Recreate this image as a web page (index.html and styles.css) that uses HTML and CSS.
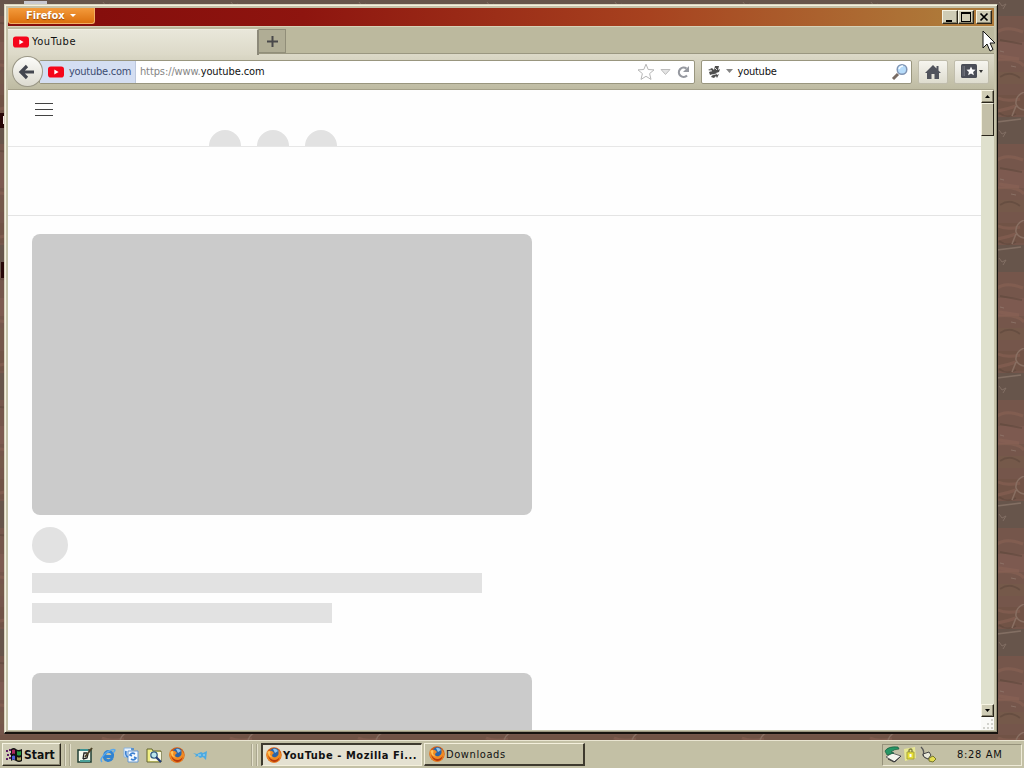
FILE: index.html
```html
<!DOCTYPE html>
<html lang="en">
<head>
  <meta charset="UTF-8">
  <meta name="viewport" content="width=device-width, initial-scale=1.0">
  <title>YouTube</title>
  <link rel="stylesheet" href="styles.css">
</head>
<body>
  <svg class="wallpaper" width="1024" height="768">
    <defs>
      <pattern id="stone" width="128" height="128" patternUnits="userSpaceOnUse" y="92">
        <rect width="128" height="128" fill="#75564b"/>
        <path d="M0 3h128v20H0z" fill="#715346"/>
        <path d="M0 25h128v27H0z" fill="#67554b"/>
        <path d="M0 78h128v18H0z" fill="#7d5a50"/>
        <path d="M0 108h128v12H0z" fill="#75594a"/>
        <g opacity=".5">
          <path d="M102 6q8 4 22 1M100 69q9-8 27-1M103 92l20 3M0 17q30-8 60 0t60-3M0 101q40 6 80-2t48 3" stroke="#8d6456" stroke-width="3" fill="none"/>
          <path d="M103 21q8 6 17 1M104 76l22 4M104 113q10-7 20 1M0 59q50 6 95 0" stroke="#594438" stroke-width="2" fill="none"/>
          <path d="M103 38l3 4 4-2-3 5M104 87l4 1M115 102l5 1" stroke="#9b877b" stroke-width="1" fill="none"/>
          <path d="M128 0q-9 4-8 12q2 5 8 6M120 14l-4 10M101 30l24-3" stroke="#a08a7c" stroke-width="1.500" fill="none"/>
        </g>
      </pattern>
      <symbol id="firefox" viewBox="0 0 16 16">
        <circle cx="8" cy="8" r="7.7" fill="#d95c10"/>
        <circle cx="8.5" cy="6.3" r="5.2" fill="#2a65a8"/>
        <path d="M7 2q3-1 5 2L9 6z" fill="#8ec5ec"/>
        <path d="M1 3l1 2q2-2 4-1l2 2-2 2q0 3 4 2 4-2 2-7 4 3 3 7-2 6-8 5.5Q1 14 .5 8z" fill="#f08a22"/>
        <path d="M2 8q2 5 7 5 4-1 5-4-1 6-6 6-5-1-6-7z" fill="#b93a0b"/>
        <path d="M1.500 5q2-2 3 0L4 8l3 3-4-2z" fill="#ffc25a"/>
      </symbol>
      <symbol id="youtube" viewBox="0 0 16 12">
        <rect y=".5" width="16" height="11" rx="2.8" fill="#f5051b"/>
        <path d="M6.300 3.600v4.800L10.600 6z" fill="#fff"/>
      </symbol>
    </defs>
    <rect width="1024" height="768" fill="url(#stone)"/>
    <rect x="24" y="1" width="23" height="3" fill="#c8c8d0"/>
    <path d="M0 113h4v15H0zM1 262h3v16H1z" fill="#280706"/>
    <path d="M3 116h1v8H3z" fill="#f6e8e4"/>
  </svg>

  <div class="window">
    <div class="titlebar">
      <div class="firefox-button"><span>Firefox</span> <span class="arrow"></span></div>
      <div class="window-buttons">
        <div class="win-btn"><svg width="14" height="12"><path d="M3 9h6v2H3z"/></svg></div>
        <div class="win-btn"><svg width="14" height="12"><path d="M2 1h10v10H2zM3 3v7h8V3z" fill-rule="evenodd"/></svg></div>
        <div class="win-btn close"><svg width="14" height="12"><path d="M3.500 2.500l7 7M10.500 2.500l-7 7" stroke="#000" stroke-width="1.700"/></svg></div>
      </div>
    </div>

    <div class="tabs">
      <div class="tab"><svg width="16" height="12"><use href="#youtube"/></svg><span>YouTube</span></div>
      <div class="new-tab"><svg width="11" height="11"><path d="M4.500 0h2v4.500H11v2H6.500V11h-2V6.500H0v-2h4.500z" fill="#48484a"/></svg></div>
    </div>

    <div class="navbar">
      <div class="back"><svg width="18" height="16"><path d="M9 2L3 8l6 6M4 8h12" stroke="#43464f" stroke-width="3.200" fill="none"/></svg></div>
      <div class="urlbar">
        <div class="identity"><svg width="16" height="12"><use href="#youtube"/></svg><span>youtube.com</span></div>
        <div class="url">https://www.<b>youtube.com</b></div>
        <svg class="star" width="18" height="18"><path d="M9 1.200l2.200 5.300 5.800.4-4.400 3.700 1.400 5.800L9 13.300l-5 3.100 1.400-5.800L1 6.900l5.800-.4z" fill="#fff" stroke="#b6b6b6"/></svg>
        <svg class="drop" width="11" height="8"><path d="M1 1.500h9L5.500 6.500z" fill="#e4e4e4" stroke="#bcbcbc"/></svg>
        <svg class="reload" width="14" height="14"><path d="M10.500 3.500A4.700 4.700 0 1 0 11 10.500" fill="none" stroke="#9699a0" stroke-width="2.200"/><path d="M13 1v6H7z" fill="#9699a0"/></svg>
      </div>
      <div class="search">
        <svg width="14" height="14"><path d="M1 5l4-2 2 2 1-4h4l-1 4 2-1-1 3-3 1 1 2 2-1-2 4-1-2-2 2-3-1 2-3-3 1-1-3 3-1z" fill="#4e4e4e"/><path d="M3 5l2 1M8 3l2 2M5 10l4-1" stroke="#ddd"/></svg>
        <svg width="7" height="5"><path d="M0 0h7L3.500 4z" fill="#858585"/></svg>
        <span>youtube</span>
        <svg class="magnifier" width="18" height="18"><path d="M7 11l-5 5" stroke="#786b64" stroke-width="3"/><circle cx="11" cy="6.500" r="4.800" fill="#b7dcfa" stroke="#8095b4" stroke-width="1.500"/><path d="M8 6q1-3 4-3" stroke="#f4fbff" stroke-width="1.500" fill="none"/></svg>
      </div>
      <div class="tool"><svg width="16" height="14"><path d="M8 0L0 8h2v6h4.500V9h3v5H14V8h2l-2.500-2.500V1h-2v2.500z" fill="#50535c"/></svg></div>
      <div class="tool bookmarks"><svg width="23" height="15"><rect x="0" y="0" width="16" height="14" rx="1.500" fill="#4a4d57"/><path d="M2 2v10M3.500 2v10" stroke="#7d808a" stroke-width=".7"/><path d="M10 2.500l1.300 3.100 3.300.2-2.500 2.100.8 3.300L10 9.500l-2.900 1.700.8-3.300-2.500-2.100 3.300-.2z" fill="#fff"/><path d="M18 6h4l-2 3z" fill="#333"/></svg></div>
    </div>

    <div class="viewport">
      <div class="page">
        <div class="masthead">
          <div class="menu-icon"><i></i><i></i><i></i></div>
          <div class="dots"><i></i><i></i><i></i></div>
        </div>
        <div class="chips"></div>
        <div class="feed">
          <div class="video">
            <div class="thumb"></div>
            <div class="avatar"></div>
            <div class="line"></div>
            <div class="line short"></div>
          </div>
          <div class="video">
            <div class="thumb"></div>
          </div>
        </div>
      </div>
      <div class="scrollbar">
        <div class="scroll-btn"><svg width="5" height="3"><path d="M0 3h5L2.500 0z"/></svg></div>
        <div class="scroll-thumb"></div>
        <div class="scroll-btn down"><svg width="5" height="3"><path d="M0 0h5L2.500 3z"/></svg></div>
        <svg class="grip" width="13" height="13"><path d="M10 2h2v2h-2zM6 6h2v2H6zM10 6h2v2h-2zM2 10h2v2H2zM6 10h2v2H6zM10 10h2v2h-2z" fill="#d3d3cd"/></svg>
      </div>
    </div>
  </div>

  <div class="taskbar">
    <div class="start">
      <svg width="17" height="16"><path d="M0 3h2v2H0zM1 7h2v2H1zM0 11h2v2H0zM3 2h2v2H3zM4 6h1v2H4zM3 10h2v2H3z" fill="#5d1f66"/><path d="M5 2q3-2 5 0t6 0v12q-3 2-6 0t-5 0z" fill="#111"/><path d="M6 3q2-1 3 0v4q-1-1-3 0z" fill="#b02a60"/><path d="M11 4q2 1 4 0v4q-2 1-4 0z" fill="#259b43"/><path d="M6 9q2-1 3 0v4q-1-1-3 0z" fill="#5060d8"/><path d="M11 10q2 1 4 0v3q-2 1-4 0z" fill="#a89d59"/></svg>
      <span>Start</span>
    </div>
    <div class="separator"></div>
    <div class="quick-launch">
      <svg width="16" height="16"><path d="M1 3h13v12H1z" fill="#f6fbed" stroke="#1f3e34" stroke-width="1.500"/><path d="M3 2h8v2H3z" fill="#3d9292"/><path d="M3 14h10" stroke="#4ba098" stroke-width="2"/><path d="M6 12l1-6h3M6 12l4-1 1-4" fill="none" stroke="#222" stroke-width="1.300"/><path d="M8 10l7-9" stroke="#4a4127" stroke-width="2"/></svg>
      <svg width="16" height="16"><path d="M12.500 11q-2 3-5 2.500-4-1-3-5.500 1-4 5-3.500 4 1 3 5H5" fill="none" stroke="#3183d1" stroke-width="2.800"/><path d="M2 15Q-1 12 6 6q7-5 9-3 0 1-2 3" fill="none" stroke="#58a8ed" stroke-width="1.500"/></svg>
      <svg width="16" height="16"><path d="M1 1h8v9H1z" fill="#e7f3ff" stroke="#8ab4df"/><path d="M5 4h10v11H5z" fill="#f6fbff" stroke="#6596d0"/><path d="M12 7q-3-2-5 1l2 1M8 12q3 2 5-1l-2-1M3 4q-1 5 2 6M11 2H8" fill="none" stroke="#3c81d2" stroke-width="1.700"/></svg>
      <svg width="16" height="16"><path d="M1 2h5l1 2h8v11H1z" fill="#f1ef83" stroke="#62652f"/><path d="M4 5h11v9H4z" fill="#fbfae0"/><circle cx="8" cy="8" r="3.200" fill="#bde8ee" stroke="#376083" stroke-width="1.300"/><path d="M10 10l5 5" stroke="#243d78" stroke-width="2.200"/></svg>
      <svg width="16" height="16"><use href="#firefox"/></svg>
      <svg width="16" height="16"><path d="M1 6l4 1 4-2 2 1 4-2-1 9-3-3-3 1-2-2-3 1 1-2z" fill="#4caae2"/><path d="M6 8h3M11 8h2" stroke="#b0d8ed"/></svg>
    </div>
    <div class="separator second"></div>
    <div class="task active"><svg width="16" height="16"><use href="#firefox"/></svg><span>YouTube - Mozilla Fi...</span></div>
    <div class="task"><svg width="16" height="16"><use href="#firefox"/></svg><span>Downloads</span></div>
    <div class="tray">
      <svg width="18" height="17"><path d="M2 11l6-4 9 3-6 6z" fill="#f5f5ed" stroke="#666"/><path d="M4 13l6 3 7-6" fill="none" stroke="#333"/><path d="M1 5q3-5 13-4l1 2q-5 0-8 3l3 1-7 2z" fill="#279665" stroke="#155a3c" stroke-width=".7"/></svg>
      <svg width="17" height="17"><path d="M2 3l11-2 1 11-11 3z" fill="#e8e892"/><path d="M5 6h7v7H5z" fill="#e7df35" stroke="#a8a53c"/><path d="M7 6V4q2-2 3 0v2" fill="none" stroke="#818143" stroke-width="1.300"/><path d="M7.500 8h2v3h-2z" fill="#fff"/></svg>
      <svg width="18" height="17"><path d="M2 1q4 4 2 8 3 4 8 4" fill="none" stroke="#555" stroke-width="1.300"/><path d="M4 8l6-2 2 3-3 4-4-2z" fill="#e8e8d8" stroke="#444"/><path d="M10 12l4-2 3 3-3 3-4-1z" fill="#e4dd51" stroke="#77772b"/></svg>
      <span class="clock">8:28 AM</span>
    </div>
  </div>

  <svg class="cursor" width="14" height="22"><path d="M1 1v17l4-4 3 7 3-1.500-3-6.500h5z" fill="#fff" stroke="#111"/></svg>
</body>
</html>
```
FILE: styles.css
```css
* {
  margin: 0;
  padding: 0;
  box-sizing: border-box;
}
body {
  width: 1024px;
  height: 768px;
  overflow: hidden;
  position: relative;
  display: flex;
  flex-direction: column;
  justify-content: space-between;
  padding-top: 4px;
  font-family: "DejaVu Sans Condensed", "DejaVu Sans", sans-serif;
  font-size: 11px;
  color: #111;
  background-color: #75564b;
}
svg {
  display: block;
  flex: none;
}
span, .url {
  white-space: nowrap;
}
.wallpaper {
  position: absolute;
  top: 0;
  left: 0;
  z-index: -1;
}
.window {
  width: 994px;
  height: 730px;
  margin-left: 4px;
  padding: 3px 3px 2px;
  background: #c5c2a9;
  border: 1px solid #d9d5bf;
  border-right: 1px solid #17130f;
  border-bottom: 2px solid #17130f;
  box-shadow: inset 1px 1px #f5f1df, inset -1px -1px #99947e;
}
.titlebar {
  height: 18px;
  display: flex;
  justify-content: space-between;
  background: linear-gradient(90deg, #860e0c 9%, #8e150f 30%, #a7421f 65%, #ae7939 95%);
}
.firefox-button {
  width: 87px;
  height: 16px;
  padding-left: 17px;
  display: flex;
  align-items: center;
  gap: 5px;
  color: #fff;
  font-weight: bold;
  letter-spacing: -0.1px;
  text-shadow: 0 1px 1px #934300;
  background: linear-gradient(#f39b3c, #dc700e);
  border: 1px solid #f2b064;
  border-top: 0;
  border-radius: 0 0 3px 3px;
}
.arrow {
  border: 3px solid transparent;
  border-top-color: #fff;
  border-bottom: 0;
}
.window-buttons {
  display: flex;
  padding: 2px 2px 0 0;
}
.win-btn, .scroll-btn, .start {
  background: #cfccb5;
  border: 1px solid #f6f3e2;
  border-right-color: #29251b;
  border-bottom-color: #29251b;
  box-shadow: inset -1px -1px #898570;
}
.win-btn {
  width: 16px;
  height: 14px;
}
.close {
  margin-left: 2px;
}
.tabs {
  height: 28px;
  padding-top: 2px;
  display: flex;
  background: #bcb99e;
  border-top: 1px solid #d7d2b8;
  border-bottom: 1px solid #9a9781;
}
.tab {
  width: 251px;
  height: 26px;
  display: flex;
  align-items: center;
  gap: 3px;
  padding: 0 0 2px 5px;
  background: linear-gradient(#e9e7da, #dcd9c8);
  border-top: 1px solid #f1efe3;
  border-right: 2px solid #8c8979;
}
.tab span {
  letter-spacing: 0.6px;
}
.new-tab {
  width: 27px;
  height: 24px;
  display: flex;
  align-items: center;
  justify-content: center;
  background: #b0ad95;
  border: 1px solid #918e79;
  border-left: 0;
}
.navbar {
  height: 36px;
  display: flex;
  align-items: center;
  padding: 0 5px 0 4px;
  background: linear-gradient(#dcd9c8, #bebba2);
  border-bottom: 1px solid #a5a18a;
}
.back {
  width: 31px;
  height: 31px;
  border: 1px solid #9a9786;
  border-radius: 50%;
  display: flex;
  align-items: center;
  justify-content: center;
  background: linear-gradient(#fcfcf9, #dcdacf);
  z-index: 1;
}
.urlbar, .search {
  height: 24px;
  display: flex;
  align-items: center;
  background: #fff;
  border: 1px solid #99967f;
  border-radius: 2px;
}
.urlbar {
  width: 657px;
  margin-left: -4px;
}
.identity {
  width: 96px;
  height: 22px;
  display: flex;
  align-items: center;
  gap: 5px;
  padding-left: 8px;
  color: #3d4c71;
  letter-spacing: -0.25px;
  background: #d4def2;
  border-right: 1px solid #bdc8dd;
}
.url {
  flex: 1;
  margin-left: 4px;
  letter-spacing: -0.1px;
  color: #858585;
}
.url b {
  color: #111;
  font-weight: normal;
}
.drop {
  margin-left: 5px;
}
.reload {
  margin: 0 4px 0 5px;
}
.search {
  width: 212px;
  margin-left: 6px;
  padding: 0 2px 0 5px;
}
.search span {
  flex: 1;
  margin-left: 5px;
  letter-spacing: -0.25px;
}
.search svg + svg {
  margin-left: 5px;
}
.tool {
  width: 30px;
  height: 24px;
  margin-left: 6px;
  display: flex;
  align-items: center;
  justify-content: center;
  background: linear-gradient(#f6f5ef, #dedccf);
  border: 1px solid #c0bdac;
  border-radius: 2px;
}
.bookmarks {
  width: 35px;
  padding-left: 2px;
}
.viewport {
  height: 640px;
  display: flex;
  background: #fefefe;
}
.page {
  width: 973px;
  overflow: hidden;
}
.masthead {
  height: 57px;
  padding: 13px 0 0 27px;
  overflow: hidden;
  display: flex;
  border-bottom: 1px solid #e7e7e7;
}
.menu-icon {
  width: 18px;
  height: 13px;
  display: flex;
  flex-direction: column;
  justify-content: space-between;
}
.menu-icon i {
  height: 1px;
  background: #424242;
}
.dots {
  display: flex;
  gap: 16px;
  margin: 27px 0 0 156px;
}
.dots i {
  width: 32px;
  height: 32px;
  border-radius: 50%;
  background: #e2e2e2;
}
.chips {
  height: 69px;
  border-bottom: 1px solid #e4e4e4;
}
.feed {
  padding: 18px 24px 0;
}
.video {
  height: 439px;
}
.thumb {
  width: 500px;
  height: 281px;
  border-radius: 8px;
  background: #cbcbcb;
}
.avatar {
  width: 36px;
  height: 36px;
  margin: 12px 0 10px;
  border-radius: 50%;
  background: #e2e2e2;
}
.line {
  width: 450px;
  height: 20px;
  margin-bottom: 10px;
  background: #e2e2e2;
}
.line.short {
  width: 300px;
}
.scrollbar {
  width: 13px;
  display: flex;
  flex-direction: column;
  background: #dfe0cd;
}
.scroll-btn {
  height: 13px;
  display: flex;
  align-items: center;
  justify-content: center;
}
.scroll-thumb {
  height: 33px;
  background: #c4c0a8;
  border: 1px solid #f6f3e2;
  border-right-color: #29251b;
  border-bottom-color: #29251b;
}
.down {
  margin-top: auto;
}
.grip {
  background: #fafaf7;
}
.taskbar {
  height: 28px;
  display: flex;
  align-items: center;
  padding: 0 2px;
  background: #c3c0a5;
  border-top: 1px solid #e9e5d1;
}
.start {
  width: 59px;
  height: 23px;
  display: flex;
  align-items: center;
  gap: 1px;
  padding-left: 3px;
  font-size: 12px;
  font-weight: bold;
}
.separator {
  width: 6px;
  height: 22px;
  margin-left: 3px;
  border-left: 1px solid #aaa68f;
  border-right: 1px solid #aaa68f;
  box-shadow: inset 1px 0 #e4e0cc, 1px 0 #e4e0cc;
}
.quick-launch {
  display: flex;
  gap: 7px;
  margin-left: 7px;
}
.second {
  margin-left: 43px;
}
.task {
  width: 161px;
  height: 23px;
  display: flex;
  align-items: center;
  gap: 1px;
  padding-left: 4px;
  margin-left: 2px;
  letter-spacing: 0.6px;
  background: #c3c0a5;
  border: 1px solid #f4f0dc;
  border-right: 2px solid #3e3a2e;
  border-bottom: 2px solid #3e3a2e;
}
.task.active {
  font-weight: bold;
  padding-left: 3px;
  margin-left: 4px;
  letter-spacing: 0.55px;
  background: #e4e1d1;
  border: 1px solid #f4f0dc;
  border-top: 2px solid #3e3a2e;
  border-left: 2px solid #3e3a2e;
}
.tray {
  width: 140px;
  height: 22px;
  margin-left: auto;
  display: flex;
  align-items: center;
  padding-left: 1px;
  border: 1px solid #96927b;
  border-right-color: #eeead7;
  border-bottom-color: #eeead7;
}
.clock {
  margin-left: 20px;
  letter-spacing: 0.7px;
}
.cursor {
  position: absolute;
  left: 982px;
  top: 30px;
}
```
